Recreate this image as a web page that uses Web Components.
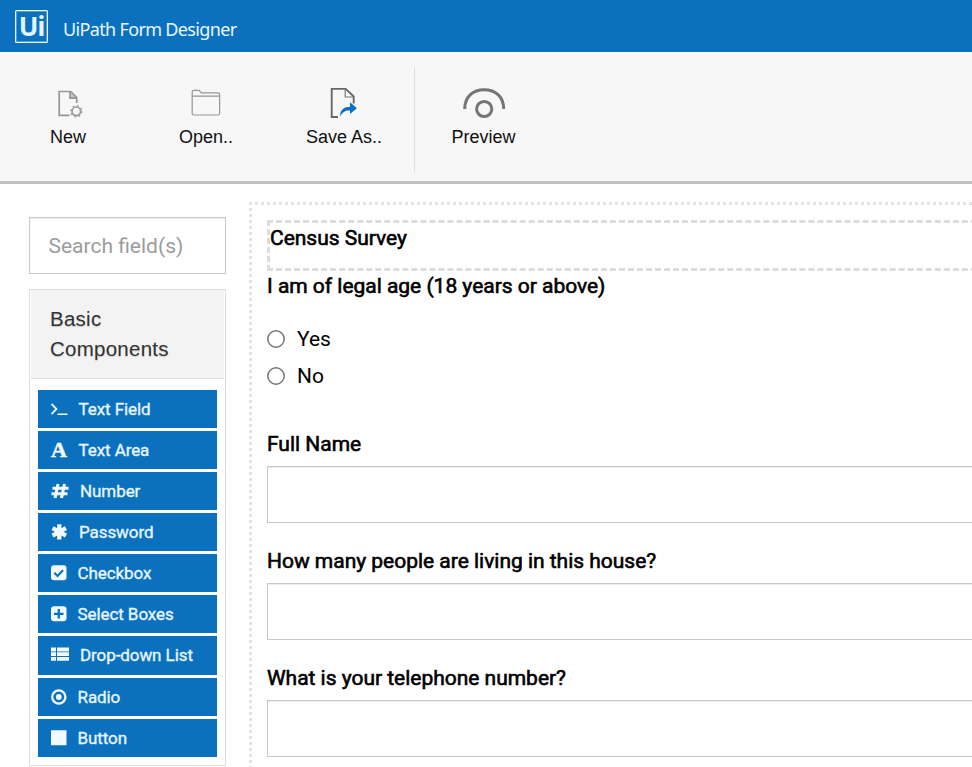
<!DOCTYPE html>
<html lang="en">
<head>
<meta charset="utf-8">
<title>UiPath Form Designer</title>
<style>
html, body { margin: 0; height: 767px; overflow: hidden; background: #fff; }
body { font-family: Roboto, sans-serif; color: #000; }
</style>
</head>
<body>
<form-designer></form-designer>
<script>
const define = (name, html) => {
  const template = document.createElement('template');
  template.innerHTML = html;
  customElements.define(name, class extends HTMLElement {
    constructor() {
      super();
      this.attachShadow({ mode: 'open' }).append(template.content.cloneNode(true));
    }
  });
};

define('app-header', `
<style>
:host { display: flex; height: 52px; background: #0b71be; color: #e9f8ff; align-items: flex-start; }
.logo { box-sizing: border-box; width: 33px; height: 33px; margin: 10px 0 0 15px; border: 1px solid #e3f5ff; outline: 1px solid rgba(227,245,255,.35); outline-offset: -2px; border-radius: 1px; color: #e3f5ff; display: flex; justify-content: center; font: 700 26px/30px "Noto Sans", sans-serif; letter-spacing: -1px; }
.logo span { display: block; height: 32px; }
.title { font: 18px/24px "Noto Sans", sans-serif; margin: 17px 0 0 15px; letter-spacing: -.66px; white-space: nowrap; }
</style>
<div class="logo"><span>Ui</span></div>
<div class="title"><slot></slot></div>`);

define('tool-item', `
<style>
:host { display: flex; flex-direction: column; align-items: center; width: 138px; box-sizing: border-box; padding-top: 31px; font: 18px/24px "Liberation Sans", sans-serif; color: #111; white-space: nowrap; }
.icon { height: 42px; display: flex; justify-content: center; }
::slotted(svg) { display: block; }
</style>
<div class="icon"><slot name="icon"></slot></div><slot></slot>`);

define('tool-bar', `
<style>
:host { display: flex; height: 129px; background: #f7f7f7; border-bottom: 3px solid #c0c0c0; }
.rule { width: 1px; height: 105px; margin: 15px 0 0 1px; background: #dfdfdf; }
.first { margin-left: -1px; }
.last { width: 137px; }
</style>
<tool-item class="first"><svg slot="icon" width="40" height="40" fill="none" stroke="#979797" stroke-width="1.7"><path d="M21.500 32.300H11.200V8.500h11.500l6 6V20M22 8.700v6.500h6.700"/><path d="M22.500 9l6 6h-6z" fill="#979797" fill-opacity=".5" stroke="none"/><circle cx="28.300" cy="28.300" r="4.300"/><circle cx="28.300" cy="28.300" r="5.600" stroke-dasharray="1.800 2.598" stroke-width="1.300"/></svg>New</tool-item>
<tool-item><svg slot="icon" width="40" height="40" fill="none" stroke="#969696" stroke-width="1.200"><path d="M6.200 31V9.100Q6.200 7.300 8 7.300h5.200l2.200 2.500h16.400q1.800 0 1.800 1.800V30.200q0 1.800-1.800 1.800H8q-1.800 0-1.800-1.800M6.200 13.200h27.400"/></svg>Open..</tool-item>
<tool-item><svg slot="icon" width="40" height="40" fill="none"><path d="M14 34H7.700V5.900h14l8 7.600v7" stroke="#686868" stroke-width="1.900"/><path d="M21.200 6.500V14H29" stroke="#777" stroke-width="1.200"/><path d="M16 33.700c0-7 4-10 10-10v-4.400l6.900 6-6.900 5.700V27.600c-5 0-7.500 1.600-10 6.100z" fill="#0b71be"/></svg>Save As..</tool-item>
<div class="rule"></div>
<tool-item class="last"><svg slot="icon" width="44" height="40" fill="none" stroke="#757575"><path d="M2.700 26C2.700 13.500 11.200 6.700 22.200 6.700S41.700 13.500 41.700 26" stroke-width="3"/><circle cx="22.200" cy="26" r="7.600" stroke-width="3"/></svg>Preview</tool-item>`);

define('search-box', `
<style>
:host { display: flex; align-items: center; box-sizing: border-box; height: 57px; border: 1px solid #c8c8c8; padding-left: 18.500px; background: #fff; box-shadow: inset 0 1px 1px rgba(0,0,0,.07); font: 21px/24px Roboto, sans-serif; color: #9c9c9c; }
</style><span><slot></slot></span>`);

define('component-chip', `
<style>
:host { display: flex; align-items: center; height: 38px; background: #0b71be; color: #e7f6ff; font: 400 17px/24px Roboto, sans-serif; white-space: nowrap; -webkit-text-stroke: .35px #e7f6ff; }
::slotted(*) { display: block; flex: none; margin-left: 12px; }
.label { margin-left: var(--gap, 10px); letter-spacing: -.08px; }
</style><slot name="icon"></slot><span class="label"><slot></slot></span>`);

define('component-panel', `
<style>
:host { display: block; box-sizing: border-box; height: 477px; border: 1px solid #ddd; }
.head { height: 89px; box-sizing: border-box; margin: 0 1px; padding: 14px 0 0 19px; background: #f3f3f3; border-bottom: 1px solid #ddd; font: 20.500px/30px "Liberation Sans", sans-serif; letter-spacing: .25px; color: #333; text-shadow: 0 1px 1px rgba(0,0,0,.18); }
.list { display: flex; flex-direction: column; gap: 3px; padding: 11px 8px 0; }
svg { fill: #f2faff; stroke: none; }
.glyph { width: 19px; text-align: center; font: 700 22px/28px "Liberation Serif", serif; color: #f2faff; text-indent: -1px; -webkit-text-stroke: .5px #f2faff; }
.tall { height: 39px; box-sizing: border-box; padding-bottom: 1px; }
</style>
<div class="head">Basic<br>Components</div>
<div class="list">
<component-chip style="--gap:9.500px"><svg slot="icon" width="19" height="20"><path d="M1.500 5l5 5-5 5" fill="none" stroke="#e7f6ff" stroke-width="1.800"/><path d="M7.500 14.500h10V16h-10z"/></svg>Text Field</component-chip>
<component-chip style="--gap:9.500px"><span slot="icon" class="glyph">A</span>Text Area</component-chip>
<component-chip style="--gap:10px"><svg slot="icon" width="20" height="20"><path d="M8 3L5 17M14.500 3l-3 14M2.500 7.300H18.500M1.500 12.700H17.500" fill="none" stroke="#f2faff" stroke-width="3.100"/></svg>Number</component-chip>
<component-chip style="--gap:9px"><svg slot="icon" width="20" height="20"><path d="M9.300 2.300v15.200M2.600 6.200l13.400 7.500M16 6.200L2.600 13.700" fill="none" stroke="#f2faff" stroke-width="4.300"/></svg>Password</component-chip>
<component-chip style="--gap:8.500px"><svg slot="icon" width="19" height="20"><rect x="1" y="2.300" width="15.500" height="15" rx="3"/><path d="M4.300 9.800l3.200 3.200 5.500-5.700" fill="none" stroke="#0b71be" stroke-width="2.100"/></svg>Checkbox</component-chip>
<component-chip style="--gap:8.500px"><svg slot="icon" width="19" height="20"><rect x="1" y="2.300" width="15.500" height="15" rx="3"/><path d="M8.750 5v9.600M3.950 9.800h9.600" fill="none" stroke="#0b71be" stroke-width="2.300"/></svg>Select Boxes</component-chip>
<component-chip class="tall" style="--gap:10px"><svg slot="icon" width="20" height="20"><path d="M1 2.500h5v3.900H1zM7 2.500h12v3.900H7zM1 7.200h5v3.900H1zM7 7.200h12v3.900H7zM1 11.900h5v3.900H1zM7 11.900h12v3.900H7z"/></svg>Drop-down List</component-chip>
<component-chip style="--gap:8.500px"><svg slot="icon" width="19" height="20"><circle cx="8.800" cy="10" r="6.600" fill="none" stroke="#f2faff" stroke-width="2.300"/><circle cx="8.800" cy="10" r="2.900"/></svg>Radio</component-chip>
<component-chip style="--gap:8.500px"><svg slot="icon" width="19" height="20"><rect x="1" y="2.300" width="15.500" height="15" rx=".5"/></svg>Button</component-chip>
</div>`);

define('field-label', `
<style>
:host { display: block; font: 400 21px/24px Roboto, sans-serif; -webkit-text-stroke: .6px #000; white-space: nowrap; letter-spacing: -.02px; }
</style><slot></slot>`);

define('radio-option', `
<style>
:host { display: flex; align-items: center; height: 37px; font: 21px/24px Roboto, sans-serif; }
svg { display: block; margin-right: 12px; }
</style><svg width="18" height="18"><circle cx="9" cy="9" r="8.200" fill="none" stroke="#767676" stroke-width="1.500"/></svg><span><slot></slot></span>`);

define('text-field', `
<style>
:host { display: block; height: 117px; }
.box { height: 57px; box-sizing: border-box; margin-top: 10px; border: 1px solid #c8c8c8; box-shadow: inset 0 1px 1px rgba(0,0,0,.075); }
</style><field-label><slot></slot></field-label><div class="box"></div>`);

define('form-canvas', `
<style>
:host { display: block; box-sizing: border-box; height: 565px; width: 800px; padding: 18px;
 background:
  repeating-linear-gradient(90deg, #e3e3e3 0 3px, transparent 3px 6px) 0 0 / 100% 3px no-repeat,
  repeating-linear-gradient(180deg, #e3e3e3 0 3px, transparent 3px 6px) 0 0 / 3px 100% no-repeat; }
.heading { height: 51px; box-sizing: border-box; border: 3px dashed #ddd; padding-top: 3px; margin-bottom: 3px; }
.options { padding: 22px 0 38px; }
</style>
<div class="heading"><field-label>Census Survey</field-label></div>
<field-label>I am of legal age (18 years or above)</field-label>
<div class="options"><radio-option>Yes</radio-option><radio-option>No</radio-option></div>
<text-field>Full Name</text-field>
<text-field>How many people are living in this house?</text-field>
<text-field>What is your telephone number?</text-field>`);

define('form-designer', `
<style>
:host { display: block; width: 972px; height: 767px; overflow: hidden; }
.work { display: flex; height: 583px; overflow: hidden; }
aside { flex: none; width: 197px; margin-left: 29px; padding-top: 33px; display: flex; flex-direction: column; gap: 15px; }
form-canvas { flex: none; margin: 18px 0 0 23px; }
</style>
<app-header>UiPath Form Designer</app-header>
<tool-bar></tool-bar>
<div class="work">
<aside><search-box>Search field(s)</search-box><component-panel></component-panel></aside>
<form-canvas></form-canvas>
</div>`);
</script>
</body>
</html>
